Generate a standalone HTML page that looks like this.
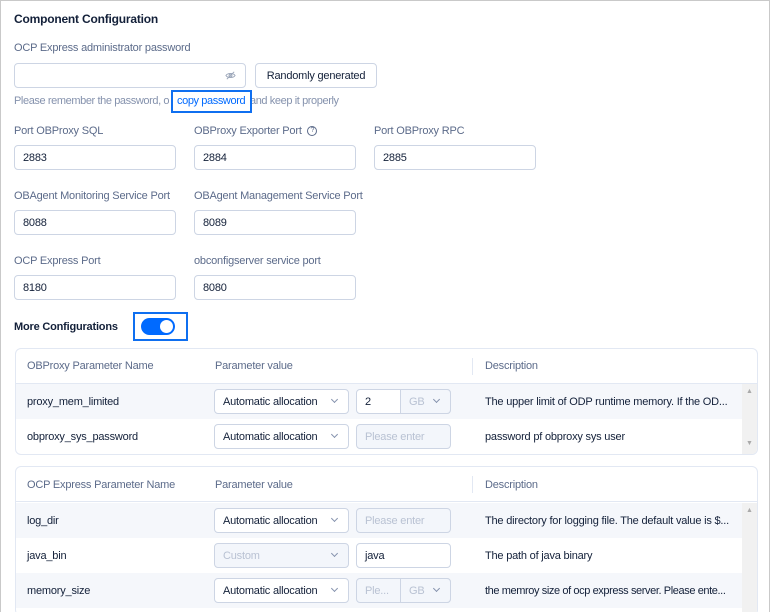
<!DOCTYPE html>
<html style="overflow:hidden;width:771px;height:612px"><head><meta charset="utf-8"><style>
*{box-sizing:border-box;margin:0;padding:0}
body{width:771px;height:612px;overflow:hidden;background:#fff;font-family:"Liberation Sans",sans-serif;font-size:11px;letter-spacing:-0.2px;color:#132039;position:relative}
.a{position:absolute;white-space:nowrap}
.lbl{color:#5c6b8a}
.in{position:absolute;height:25px;border:1px solid #cdd5e4;border-radius:4px;background:#fff;padding:0 8px;line-height:24px}
.sel{position:absolute;height:25px;border:1px solid #cdd5e4;border-radius:4px;background:#fff;padding:0 8px;line-height:24px}
.sel:after{content:"";position:absolute;right:11px;top:7px;width:4px;height:4px;border-right:1px solid #8592ad;border-bottom:1px solid #8592ad;transform:rotate(45deg)}
.dis{background:#f3f6fb;color:#b9c2d3}
.tbl{position:absolute;left:15px;width:743px;border:1px solid #e2e8f3;border-radius:6px;overflow:hidden}
.row{position:absolute;left:0;width:726px;height:35px}
.alt{background:#f5f7fb}
.hd{border-bottom:1px solid #e2e8f3}
</style></head><body>
<div class="a" style="left:0;top:0;width:770px;height:612px;border:1px solid #c9c9c9;border-bottom:none"></div>
<div class="a" style="left:14px;top:12px;font-weight:bold;font-size:12px">Component Configuration</div>
<div class="a lbl" style="left:14px;top:42px">OCP Express administrator password</div>
<div class="in" style="left:14px;top:63px;width:232px"><svg style="position:absolute;right:9px;top:6px" width="11" height="11" viewBox="0 0 12 12" fill="none" stroke="#9aa5b8" stroke-width="1"><path d="M1 6c2-3 8-3 10 0c-2 3-8 3-10 0z"/><circle cx="6" cy="6" r="1.6"/><path d="M2 10L10 2"/></svg></div>
<div class="in" style="left:255px;top:63px;width:122px;text-align:center;padding:0">Randomly generated</div>
<div class="a" style="left:14px;top:95px;color:#8592ad;letter-spacing:-0.4px">Please remember the password, o</div>
<div class="a" style="left:177px;top:95px;color:#006aff;letter-spacing:-0.4px">copy password</div>
<div class="a" style="left:250px;top:95px;color:#8592ad;letter-spacing:-0.4px">and keep it properly</div>
<div class="a" style="left:171px;top:90px;width:81px;height:23px;border:2px solid #0f6ff0"></div>
<div class="a lbl" style="left:14px;top:125px">Port OBProxy SQL</div>
<div class="a lbl" style="left:194px;top:125px">OBProxy Exporter Port &nbsp;<span style="display:inline-block;width:10px;height:10px;border:1px solid #5c6b8a;border-radius:50%;font-size:7px;line-height:8px;text-align:center;letter-spacing:0;vertical-align:middle">?</span></div>
<div class="a lbl" style="left:374px;top:125px">Port OBProxy RPC</div>
<div class="in" style="left:14px;top:145px;width:162px">2883</div>
<div class="in" style="left:194px;top:145px;width:162px">2884</div>
<div class="in" style="left:374px;top:145px;width:162px">2885</div>
<div class="a lbl" style="left:14px;top:190px">OBAgent Monitoring Service Port</div>
<div class="a lbl" style="left:194px;top:190px">OBAgent Management Service Port</div>
<div class="in" style="left:14px;top:210px;width:162px">8088</div>
<div class="in" style="left:194px;top:210px;width:162px">8089</div>
<div class="a lbl" style="left:14px;top:255px">OCP Express Port</div>
<div class="a lbl" style="left:194px;top:255px">obconfigserver service port</div>
<div class="in" style="left:194px;top:275px;width:162px">8080</div>
<div class="in" style="left:14px;top:275px;width:162px">8180</div>
<div class="a" style="left:14px;top:321px;font-weight:bold;font-size:11px">More Configurations</div>
<div class="a" style="left:133px;top:312px;width:55px;height:29px;border:2px solid #0f6ff0"></div>
<div class="a" style="left:141px;top:318px;width:34px;height:17px;border-radius:9px;background:#006aff"><div style="position:absolute;right:2px;top:2px;width:13px;height:13px;border-radius:50%;background:#fff"></div></div>

<div class="tbl" style="top:348px;height:107px">
 <div class="row hd" style="top:0;width:741px"><span class="a lbl" style="left:11px;top:11px">OBProxy Parameter Name</span><span class="a lbl" style="left:199px;top:11px">Parameter value</span><span class="a" style="left:456px;top:9px;width:1px;height:17px;background:#e2e8f3"></span><span class="a lbl" style="left:469px;top:11px">Description</span></div>
 <div class="row alt" style="top:35px"><span class="a" style="left:11px;top:12px">proxy_mem_limited</span><div class="sel" style="left:198px;top:5px;width:135px">Automatic allocation</div><div class="in" style="left:340px;top:5px;width:95px;padding:0"><span style="padding-left:8px">2</span><span class="sel dis" style="position:absolute;left:43px;top:-1px;width:51px;border-radius:0 4px 4px 0">GB</span></div><span class="a" style="left:469px;top:12px">The upper limit of ODP runtime memory. If the OD...</span></div>
 <div class="row" style="top:70px"><span class="a" style="left:11px;top:12px">obproxy_sys_password</span><div class="sel" style="left:198px;top:5px;width:135px">Automatic allocation</div><div class="in dis" style="left:340px;top:5px;width:95px">Please enter</div><span class="a" style="left:469px;top:12px">password pf obproxy sys user</span></div>
 <div class="a" style="left:726px;top:35px;width:16px;height:72px;background:#f1f1f1"><span class="a" style="left:4px;top:4px;font-size:7px;color:#aaa">▲</span><span class="a" style="left:4px;top:56px;font-size:7px;color:#aaa">▼</span></div>
</div>

<div class="tbl" style="top:466px;height:150px">
 <div class="row hd" style="top:0;width:741px"><span class="a lbl" style="left:11px;top:12px">OCP Express Parameter Name</span><span class="a lbl" style="left:199px;top:12px">Parameter value</span><span class="a" style="left:456px;top:9px;width:1px;height:17px;background:#e2e8f3"></span><span class="a lbl" style="left:469px;top:12px">Description</span></div>
 <div class="row alt" style="top:36px"><span class="a" style="left:11px;top:12px">log_dir</span><div class="sel" style="left:198px;top:5px;width:135px">Automatic allocation</div><div class="in dis" style="left:340px;top:5px;width:95px">Please enter</div><span class="a" style="left:469px;top:12px">The directory for logging file. The default value is $...</span></div>
 <div class="row" style="top:71px"><span class="a" style="left:11px;top:12px">java_bin</span><div class="sel dis" style="left:198px;top:5px;width:135px">Custom</div><div class="in" style="left:340px;top:5px;width:95px">java</div><span class="a" style="left:469px;top:12px">The path of java binary</span></div>
 <div class="row alt" style="top:106px"><span class="a" style="left:11px;top:12px">memory_size</span><div class="sel" style="left:198px;top:5px;width:135px">Automatic allocation</div><div class="in dis" style="left:340px;top:5px;width:95px;padding:0"><span style="padding-left:8px">Ple...</span><span class="sel dis" style="position:absolute;left:43px;top:-1px;width:51px;border-radius:0 4px 4px 0">GB</span></div><span class="a" style="left:469px;top:12px;letter-spacing:-0.4px">the memroy size of ocp express server. Please ente...</span></div>
 <div class="a" style="left:726px;top:36px;width:16px;height:114px;background:#f1f1f1"><span class="a" style="left:4px;top:4px;font-size:7px;color:#aaa">▲</span></div>
</div>
</body></html>
